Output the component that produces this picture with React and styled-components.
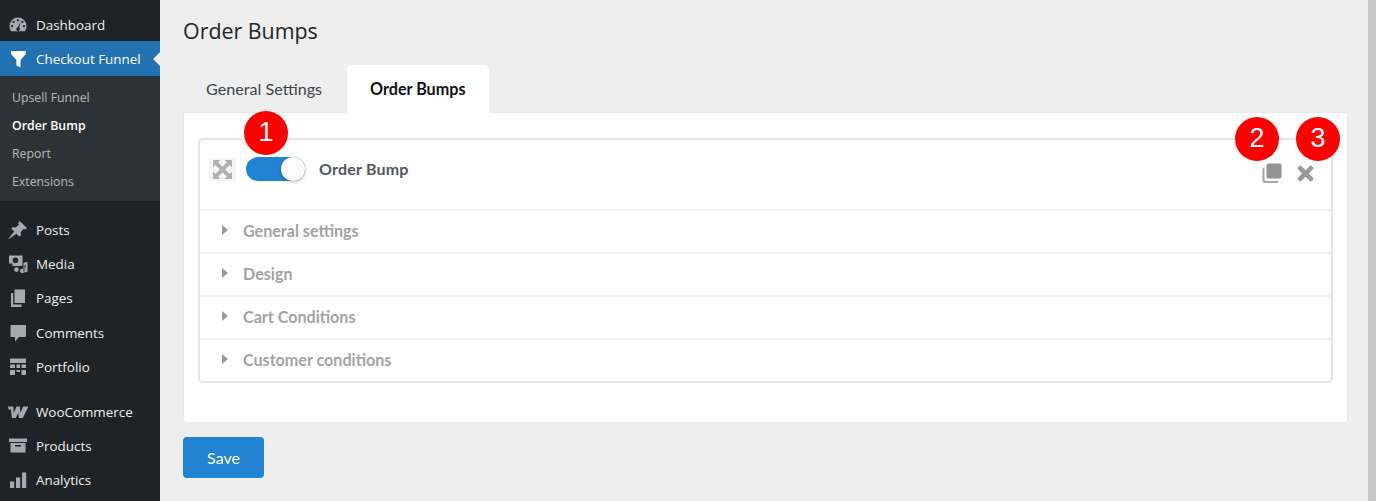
import React from 'react';
import styled, { createGlobalStyle } from 'styled-components';

const GlobalStyle = createGlobalStyle`
  html, body {
    margin: 0;
    padding: 0;
    height: 100%;
    overflow: hidden;
    background: #eeeeee;
  }
  * { box-sizing: border-box; }
`;

const Page = styled.div`
  display: flex;
  width: 1376px;
  height: 501px;
  overflow: hidden;
  background: #eeeeee;
`;

const Sidebar = styled.nav`
  flex: 0 0 160px;
  height: 501px;
  background: #1d2327;
  padding-top: 7px;
  font-family: "Open Sans", "Liberation Sans", sans-serif;
`;

const MenuItem = styled.div`
  position: relative;
  display: flex;
  align-items: center;
  height: 34.3px;
  padding: 1px 0 0 8px;
  font-size: 13.4px;
  color: ${(p) => (p.$active ? '#ffffff' : '#f0f0f1')};
  background: ${(p) => (p.$active ? '#2271b1' : 'transparent')};
  margin-top: ${(p) => (p.$gap ? '10.5px' : '0')};

  svg {
    flex: 0 0 20px;
    width: 20px;
    height: 20px;
    margin-right: 8px;
    fill: ${(p) => (p.$active ? '#ffffff' : '#a7aaad')};
  }
`;

const ActiveArrow = styled.span`
  position: absolute;
  right: 0;
  top: 10.5px;
  width: 0;
  height: 0;
  border-top: 7px solid transparent;
  border-bottom: 7px solid transparent;
  border-right: 7px solid #eeeeee;
`;

const SubMenu = styled.div`
  display: flex;
  flex-direction: column;
  height: 125.5px;
  padding: 8px 0 6px 12px;
  margin-bottom: 11px;
  background: #2c3338;
`;

const SubItem = styled.div`
  height: 28.2px;
  line-height: 28px;
  font-size: 12.3px;
  color: ${(p) => (p.$current ? '#ffffff' : 'rgba(240, 246, 252, 0.7)')};
  font-weight: ${(p) => (p.$current ? 600 : 400)};
`;

const Main = styled.main`
  flex: 1;
  padding: 0 28px 0 23px;
  font-family: Lato, "Liberation Sans", sans-serif;
`;

const Title = styled.h1`
  margin: 0;
  height: 65px;
  padding-top: 16px;
  font-family: "Open Sans", "Liberation Sans", sans-serif;
  font-size: 21.4px;
  line-height: 30px;
  font-weight: 400;
  color: #1d2327;
`;

const Tabs = styled.div`
  display: flex;
  gap: 2px;
  height: 47px;
`;

const Tab = styled.div`
  height: ${(p) => (p.$active ? '48px' : '47px')};
  padding: 0 23px;
  line-height: 48px;
  font-size: 16.15px;
  color: ${(p) => (p.$active ? '#111111' : '#3c434a')};
  font-weight: ${(p) => (p.$active ? 700 : 400)};
  background: ${(p) => (p.$active ? '#ffffff' : 'transparent')};
  border-radius: 5px 5px 0 0;
  position: relative;
  z-index: 1;
`;

const Panel = styled.section`
  position: relative;
  height: 311px;
  padding: 25px 14px 0;
  background: #ffffff;
  border: 1px solid #e8e8e8;
  border-radius: 0 0 4px 4px;
`;

const Card = styled.div`
  height: 245px;
  border: 2px solid #e6e6e6;
  border-radius: 5px;
`;

const CardHeader = styled.div`
  display: flex;
  align-items: flex-start;
  height: 71px;
  padding: 17px 12.5px 0 9px;
  border-bottom: 2px solid #f3f3f3;
`;

const ExpandBox = styled.div`
  display: flex;
  align-items: center;
  justify-content: center;
  width: 27px;
  height: 23px;
  margin-top: 1px;
  background: #f5f5f5;

  svg { width: 21px; height: 21px; fill: #b0b0b0; }
`;

const Toggle = styled.div`
  position: relative;
  width: 59px;
  height: 24px;
  margin-left: 10px;
  border-radius: 12px;
  background: #2183d2;
`;

const ToggleKnob = styled.span`
  position: absolute;
  right: 0;
  top: 0;
  width: 24px;
  height: 24px;
  border-radius: 50%;
  background: #fbfbfb;
  box-shadow: 0 1px 3px rgba(0, 0, 0, 0.3);
`;

const BumpName = styled.div`
  flex: 1;
  margin-left: 14px;
  line-height: 24px;
  font-size: 16px;
  font-weight: 700;
  letter-spacing: 0.2px;
  color: #50575e;
`;

const HeaderAction = styled.svg`
  flex: 0 0 24px;
  width: 24px;
  height: 24px;
  margin-left: 10.5px;
  margin-top: 4px;
  fill: #999999;
`;

const Row = styled.div`
  display: flex;
  align-items: center;
  height: 43px;
  padding: 0 0 ${(p) => (p.$last ? '5px' : '3px')} 22px;
  font-size: 16.1px;
  font-weight: 700;
  color: #a3a3a3;
  border-bottom: ${(p) => (p.$last ? 'none' : '2px solid #f3f3f3')};
`;

const Caret = styled.span`
  width: 0;
  height: 0;
  margin-right: 15px;
  border-top: 5px solid transparent;
  border-bottom: 5px solid transparent;
  border-left: 6px solid #999999;
`;

const SaveButton = styled.button`
  display: block;
  width: 81px;
  height: 41px;
  margin-top: 14px;
  padding: 0;
  border: none;
  border-radius: 4px;
  background: #2183d2;
  color: #ffffff;
  font-family: Lato, "Liberation Sans", sans-serif;
  font-size: 16px;
`;

const Marker = styled.div`
  position: absolute;
  left: ${(p) => p.$x}px;
  top: ${(p) => p.$y}px;
  width: 44px;
  height: 44px;
  line-height: 42px;
  text-align: center;
  border-radius: 50%;
  background: #ff0000;
  color: #ffffff;
  font-family: "Liberation Sans", Arial, sans-serif;
  font-size: 27px;
  z-index: 2;
`;

const Scrollbar = styled.div`
  position: absolute;
  top: 0;
  right: 0;
  width: 8px;
  height: 501px;
  background: #c8c8c8;
`;

const icons = {
  dashboard: (
    <path d="M10 2.500a8.500 8.500 0 0 0-8.500 8.500c0 2 .6 3.700 1.700 5.200h13.600a8.400 8.400 0 0 0 1.700-5.200A8.500 8.500 0 0 0 10 2.500zM10 4.300a1.100 1.100 0 1 1 0 2.200 1.100 1.100 0 0 1 0-2.200zM5.600 5.800a1.100 1.100 0 1 1 0 2.200 1.100 1.100 0 0 1 0-2.200zM14.400 5.800a1.100 1.100 0 1 1 0 2.200 1.100 1.100 0 0 1 0-2.200zM4 10.100a1.100 1.100 0 1 1 0 2.200 1.100 1.100 0 0 1 0-2.200zM16 10.100a1.100 1.100 0 1 1 0 2.200 1.100 1.100 0 0 1 0-2.200zM12.600 7.300l-1.400 5.400a1.800 1.800 0 1 1-1.700-.3z" fillRule="evenodd" />
  ),
  funnel: <path d="M3 2h14.800v3l-5.200 6v7.500L8.400 16.500V11L3 5z" />,
  pin: <path d="M11.500 1l7.500 7-1.900 1.400-1.200-.7-3.300 3.300.4 3.200-1.600 1.500-3-3-7.400 5.300-.5-.5 5.800-7L3.300 8.500l1.200-1.200 3.200.3 3.300-3.200-.8-1.200z" />,
  media: (
    <path d="M1 1.500h13.500v10.200h-1.600l-.9.300H4.500V9.500H1zM7.500 3.400a2.800 2.800 0 1 0 0 5.600 2.800 2.800 0 0 0 0-5.600zM15.500 8.700l4-1v8.700a2.100 2.100 0 1 1-2-2.100v-3.500l-1 .3v5.700a2.200 2.200 0 1 1-1-1.800zM8.500 13.200a2.400 2.400 0 1 1 0 4.800 2.400 2.400 0 0 1 0-4.800z" fillRule="evenodd" />
  ),
  pages: <path d="M6.500 1.500H17v13.500H6.500zM3 5h2.200v11.400H13.500V19H3z" />,
  comment: <path d="M3.500 2h13.500a1 1 0 0 1 1 1v10a1 1 0 0 1-1 1h-6L7 18.500V14H3.500a1 1 0 0 1-1-1V3a1 1 0 0 1 1-1z" />,
  portfolio: <path d="M2 1.500h16v4.500H2zM2 7.500h5v3.500H2zM8.500 7.500h3.500v3.500H8.500zM13.500 7.500h4.500v3.500h-4.500zM2 13h5v5H2zM8.500 13h3.500v2H8.500zM13.500 13h4.500v5h-4.500z" />,
  woo: <path d="M0 4.500h5.300l.4 6.500 2.900-6.500h3.300l.5 6.500 2.700-6.500h5.400L14.800 16H11l-.8-5.200L7.800 16H4L2.900 7.500H.6z" />,
  products: <path d="M1 2.500h18v3.500H1zM2.500 7h15v9.500h-15zM7 9v1.500h6V9z" fillRule="evenodd" />,
  analytics: <path d="M2 11.500h4.200v6.500H2zM8 7.500h4.200V18H8zM14 2.500h4.200V18H14z" />,
};

const NavItem = ({ icon, label, active, gap, children }) => (
  <MenuItem $active={active} $gap={gap}>
    <svg viewBox="0 0 20 20">{icons[icon]}</svg>
    {label}
    {children}
  </MenuItem>
);

const sections = ['General settings', 'Design', 'Cart Conditions', 'Customer conditions'];

const App = () => (
  <Page>
    <GlobalStyle />
    <Sidebar>
      <NavItem icon="dashboard" label="Dashboard" />
      <NavItem icon="funnel" label="Checkout Funnel" active>
        <ActiveArrow />
      </NavItem>
      <SubMenu>
        <SubItem>Upsell Funnel</SubItem>
        <SubItem $current>Order Bump</SubItem>
        <SubItem>Report</SubItem>
        <SubItem>Extensions</SubItem>
      </SubMenu>
      <NavItem icon="pin" label="Posts" />
      <NavItem icon="media" label="Media" />
      <NavItem icon="pages" label="Pages" />
      <NavItem icon="comment" label="Comments" />
      <NavItem icon="portfolio" label="Portfolio" />
      <NavItem icon="woo" label="WooCommerce" gap />
      <NavItem icon="products" label="Products" />
      <NavItem icon="analytics" label="Analytics" />
    </Sidebar>
    <Main>
      <Title>Order Bumps</Title>
      <Tabs>
        <Tab>General Settings</Tab>
        <Tab $active>Order Bumps</Tab>
      </Tabs>
      <Panel>
        <Card>
          <CardHeader>
            <ExpandBox>
              <svg viewBox="0 0 20 20">
                <path d="M1 1h7L5.800 3.200 10 7.400l4.200-4.200L12 1h7v7l-2.200-2.200L12.600 10l4.200 4.200L19 12v7h-7l2.200-2.200L10 12.600l-4.200 4.200L8 19H1v-7l2.200 2.200L7.400 10 3.200 5.800 1 8z" />
              </svg>
            </ExpandBox>
            <Toggle>
              <ToggleKnob />
            </Toggle>
            <BumpName>Order Bump</BumpName>
            <HeaderAction viewBox="0 0 24 24">
              <path d="M8.500 2.500h11a2 2 0 0 1 2 2v11a2 2 0 0 1-2 2h-11a2 2 0 0 1-2-2v-11a2 2 0 0 1 2-2z" fill="#949494" />
              <path d="M4.500 6.500v12a1.500 1.500 0 0 0 1.500 1.500h12.500a2 2 0 0 1-2 2H4.500a2 2 0 0 1-2-2V8.500a2 2 0 0 1 2-2z" fill="#a6a6a6" />
            </HeaderAction>
            <HeaderAction viewBox="0.8 -0.8 25.5 25.5">
              <path d="M7.500 4.500L12 9l4.500-4.500a1.500 1.500 0 0 1 2.100 0l1.400 1.400a1.500 1.500 0 0 1 0 2.100L15.500 12.500l4.500 4.500a1.500 1.500 0 0 1 0 2.100l-1.400 1.400a1.500 1.500 0 0 1-2.100 0L12 16l-4.500 4.500a1.500 1.500 0 0 1-2.100 0L4 19.100a1.500 1.500 0 0 1 0-2.100l4.500-4.500L4 8a1.500 1.500 0 0 1 0-2.100l1.400-1.400a1.500 1.500 0 0 1 2.100 0z" />
            </HeaderAction>
          </CardHeader>
          {sections.map((name, i) => (
            <Row key={name} $last={i === sections.length - 1}>
              <Caret />
              {name}
            </Row>
          ))}
        </Card>
      </Panel>
      <SaveButton>Save</SaveButton>
    </Main>
    <Marker $x={244} $y={111}>1</Marker>
    <Marker $x={1235} $y={117}>2</Marker>
    <Marker $x={1296} $y={117}>3</Marker>
    <Scrollbar />
  </Page>
);

export default App;
